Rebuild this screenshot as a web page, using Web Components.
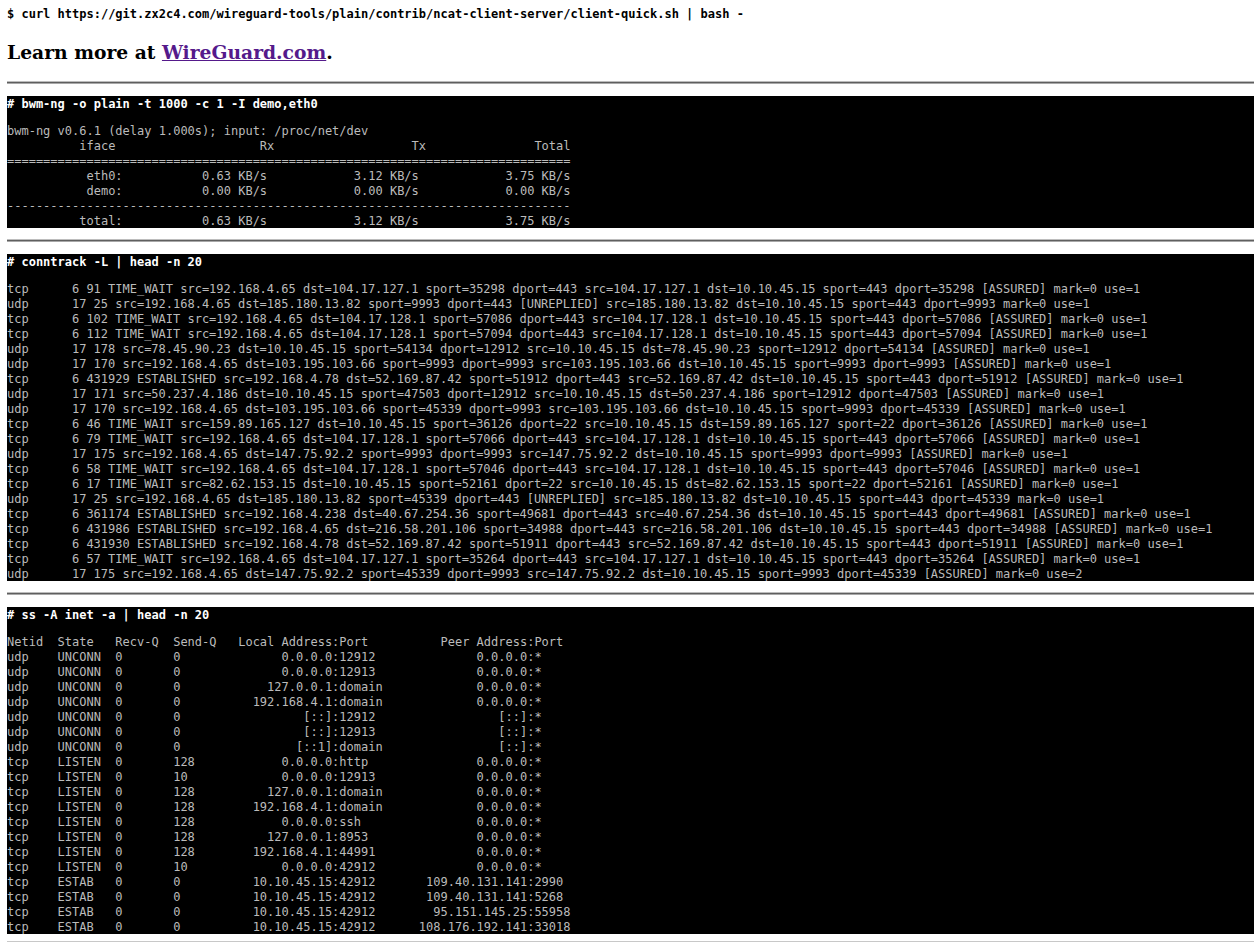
<!DOCTYPE html>
<html lang="en">
  <head>
    <meta charset="utf-8" />
    <title>WireGuard demo</title>
    <style>
      body {
        margin: 0;
        padding: 7px 0 0 7px;
        background: #fff;
        font-family: "DejaVu Serif", serif;
      }
    </style>
  </head>
  <body>
    <install-line>$ curl https://git.zx2c4.com/wireguard-tools/plain/contrib/ncat-client-server/client-quick.sh | bash -</install-line>
    <learn-more href="https://www.wireguard.com/">WireGuard.com</learn-more>
    <page-rule></page-rule>
    <term-block command="# bwm-ng -o plain -t 1000 -c 1 -I demo,eth0" id="bwm"></term-block>
    <page-rule></page-rule>
    <term-block command="# conntrack -L | head -n 20" id="conntrack" style="--squeeze: -0.007px"></term-block>
    <page-rule></page-rule>
    <term-block command="# ss -A inet -a | head -n 20" id="ss"></term-block>
    <page-rule class="last"></page-rule>

    <script type="module">
      const mono = '"DejaVu Sans Mono", monospace';

      customElements.define(
        "install-line",
        class extends HTMLElement {
          constructor() {
            super();
            this.attachShadow({ mode: "open" }).innerHTML = `
              <style>
                :host {
                  display: block;
                  font: bold 12px/15px ${mono};
                  color: #000;
                }
                pre {
                  margin: 0;
                  font: inherit;
                }
              </style>
              <pre><slot></slot></pre>`;
          }
        }
      );

      customElements.define(
        "learn-more",
        class extends HTMLElement {
          constructor() {
            super();
            const href = this.getAttribute("href");
            this.attachShadow({ mode: "open" }).innerHTML = `
              <style>
                :host {
                  display: block;
                  margin: 15px 0 14px;
                  font: bold 18.72px/30px "DejaVu Serif", serif;
                  color: #000;
                }
                a {
                  color: #551a8b;
                }
              </style>
              Learn more at <a href="${href}"><slot></slot></a>.`;
          }
        }
      );

      customElements.define(
        "page-rule",
        class extends HTMLElement {
          constructor() {
            super();
            this.attachShadow({ mode: "open" }).innerHTML = `
              <style>
                :host {
                  display: block;
                  height: 1px;
                  margin: 11px 0 12px;
                  border-top: 1px solid #bdbdbd;
                  border-bottom: 1px solid #a8a8a8;
                  background: #5f5f5f;
                }
                :host(.last) {
                  height: 0;
                  margin: 7px 0 0;
                  border-bottom: 0;
                  border-top-color: #c8c8c8;
                }
              </style>`;
          }
        }
      );

      customElements.define(
        "term-block",
        class extends HTMLElement {
          constructor() {
            super();
            this.attachShadow({ mode: "open" }).innerHTML = `
              <style>
                :host {
                  display: flow-root;
                  background: #000;
                  color: #bbb;
                  font: 12px/15px ${mono};
                }
                .command {
                  height: 14px;
                  line-height: 17px;
                  margin-bottom: 14px;
                  font-weight: bold;
                  color: #fff;
                  white-space: pre;
                }
                pre {
                  margin: 0 0 -1px;
                  font: inherit;
                  letter-spacing: var(--squeeze, 0);
                }
              </style>
              <div class="command"></div>
              <pre><slot></slot></pre>`;
            this.shadowRoot.querySelector(".command").textContent =
              this.getAttribute("command");
          }
        }
      );

      const bwmRow = (name, rx, tx, total) =>
        name.padStart(16) + rx.padStart(20) + tx.padStart(21) + total.padStart(21);

      document.querySelector("#bwm").textContent = [
        "bwm-ng v0.6.1 (delay 1.000s); input: /proc/net/dev",
        "iface".padStart(15) + "Rx".padStart(22) + "Tx".padStart(21) + "Total".padStart(20),
        "=".repeat(78),
        bwmRow("eth0:", "0.63 KB/s", "3.12 KB/s", "3.75 KB/s"),
        bwmRow("demo:", "0.00 KB/s", "0.00 KB/s", "0.00 KB/s"),
        "-".repeat(78),
        bwmRow("total:", "0.63 KB/s", "3.12 KB/s", "3.75 KB/s"),
      ].join("\n");

      document.querySelector("#conntrack").textContent = `tcp      6 91 TIME_WAIT src=192.168.4.65 dst=104.17.127.1 sport=35298 dport=443 src=104.17.127.1 dst=10.10.45.15 sport=443 dport=35298 [ASSURED] mark=0 use=1
udp      17 25 src=192.168.4.65 dst=185.180.13.82 sport=9993 dport=443 [UNREPLIED] src=185.180.13.82 dst=10.10.45.15 sport=443 dport=9993 mark=0 use=1
tcp      6 102 TIME_WAIT src=192.168.4.65 dst=104.17.128.1 sport=57086 dport=443 src=104.17.128.1 dst=10.10.45.15 sport=443 dport=57086 [ASSURED] mark=0 use=1
tcp      6 112 TIME_WAIT src=192.168.4.65 dst=104.17.128.1 sport=57094 dport=443 src=104.17.128.1 dst=10.10.45.15 sport=443 dport=57094 [ASSURED] mark=0 use=1
udp      17 178 src=78.45.90.23 dst=10.10.45.15 sport=54134 dport=12912 src=10.10.45.15 dst=78.45.90.23 sport=12912 dport=54134 [ASSURED] mark=0 use=1
udp      17 170 src=192.168.4.65 dst=103.195.103.66 sport=9993 dport=9993 src=103.195.103.66 dst=10.10.45.15 sport=9993 dport=9993 [ASSURED] mark=0 use=1
tcp      6 431929 ESTABLISHED src=192.168.4.78 dst=52.169.87.42 sport=51912 dport=443 src=52.169.87.42 dst=10.10.45.15 sport=443 dport=51912 [ASSURED] mark=0 use=1
udp      17 171 src=50.237.4.186 dst=10.10.45.15 sport=47503 dport=12912 src=10.10.45.15 dst=50.237.4.186 sport=12912 dport=47503 [ASSURED] mark=0 use=1
udp      17 170 src=192.168.4.65 dst=103.195.103.66 sport=45339 dport=9993 src=103.195.103.66 dst=10.10.45.15 sport=9993 dport=45339 [ASSURED] mark=0 use=1
tcp      6 46 TIME_WAIT src=159.89.165.127 dst=10.10.45.15 sport=36126 dport=22 src=10.10.45.15 dst=159.89.165.127 sport=22 dport=36126 [ASSURED] mark=0 use=1
tcp      6 79 TIME_WAIT src=192.168.4.65 dst=104.17.128.1 sport=57066 dport=443 src=104.17.128.1 dst=10.10.45.15 sport=443 dport=57066 [ASSURED] mark=0 use=1
udp      17 175 src=192.168.4.65 dst=147.75.92.2 sport=9993 dport=9993 src=147.75.92.2 dst=10.10.45.15 sport=9993 dport=9993 [ASSURED] mark=0 use=1
tcp      6 58 TIME_WAIT src=192.168.4.65 dst=104.17.128.1 sport=57046 dport=443 src=104.17.128.1 dst=10.10.45.15 sport=443 dport=57046 [ASSURED] mark=0 use=1
tcp      6 17 TIME_WAIT src=82.62.153.15 dst=10.10.45.15 sport=52161 dport=22 src=10.10.45.15 dst=82.62.153.15 sport=22 dport=52161 [ASSURED] mark=0 use=1
udp      17 25 src=192.168.4.65 dst=185.180.13.82 sport=45339 dport=443 [UNREPLIED] src=185.180.13.82 dst=10.10.45.15 sport=443 dport=45339 mark=0 use=1
tcp      6 361174 ESTABLISHED src=192.168.4.238 dst=40.67.254.36 sport=49681 dport=443 src=40.67.254.36 dst=10.10.45.15 sport=443 dport=49681 [ASSURED] mark=0 use=1
tcp      6 431986 ESTABLISHED src=192.168.4.65 dst=216.58.201.106 sport=34988 dport=443 src=216.58.201.106 dst=10.10.45.15 sport=443 dport=34988 [ASSURED] mark=0 use=1
tcp      6 431930 ESTABLISHED src=192.168.4.78 dst=52.169.87.42 sport=51911 dport=443 src=52.169.87.42 dst=10.10.45.15 sport=443 dport=51911 [ASSURED] mark=0 use=1
tcp      6 57 TIME_WAIT src=192.168.4.65 dst=104.17.127.1 sport=35264 dport=443 src=104.17.127.1 dst=10.10.45.15 sport=443 dport=35264 [ASSURED] mark=0 use=1
udp      17 175 src=192.168.4.65 dst=147.75.92.2 sport=45339 dport=9993 src=147.75.92.2 dst=10.10.45.15 sport=9993 dport=45339 [ASSURED] mark=0 use=2`;

      const rows = [
        ["udp", "UNCONN", "0", "0", "0.0.0.0:12912", "0.0.0.0:*"],
        ["udp", "UNCONN", "0", "0", "0.0.0.0:12913", "0.0.0.0:*"],
        ["udp", "UNCONN", "0", "0", "127.0.0.1:domain", "0.0.0.0:*"],
        ["udp", "UNCONN", "0", "0", "192.168.4.1:domain", "0.0.0.0:*"],
        ["udp", "UNCONN", "0", "0", "[::]:12912", "[::]:*"],
        ["udp", "UNCONN", "0", "0", "[::]:12913", "[::]:*"],
        ["udp", "UNCONN", "0", "0", "[::1]:domain", "[::]:*"],
        ["tcp", "LISTEN", "0", "128", "0.0.0.0:http", "0.0.0.0:*"],
        ["tcp", "LISTEN", "0", "10", "0.0.0.0:12913", "0.0.0.0:*"],
        ["tcp", "LISTEN", "0", "128", "127.0.0.1:domain", "0.0.0.0:*"],
        ["tcp", "LISTEN", "0", "128", "192.168.4.1:domain", "0.0.0.0:*"],
        ["tcp", "LISTEN", "0", "128", "0.0.0.0:ssh", "0.0.0.0:*"],
        ["tcp", "LISTEN", "0", "128", "127.0.0.1:8953", "0.0.0.0:*"],
        ["tcp", "LISTEN", "0", "128", "192.168.4.1:44991", "0.0.0.0:*"],
        ["tcp", "LISTEN", "0", "10", "0.0.0.0:42912", "0.0.0.0:*"],
        ["tcp", "ESTAB", "0", "0", "10.10.45.15:42912", "109.40.131.141:2990"],
        ["tcp", "ESTAB", "0", "0", "10.10.45.15:42912", "109.40.131.141:5268"],
        ["tcp", "ESTAB", "0", "0", "10.10.45.15:42912", "95.151.145.25:55958"],
        ["tcp", "ESTAB", "0", "0", "10.10.45.15:42912", "108.176.192.141:33018"],
      ];

      // ss keeps the port colon in one column, so pad up to it
      const ssLine = (r) => {
        const colon = (s) => s.lastIndexOf(":");
        const head = r[0].padEnd(7) + r[1].padEnd(8) + r[2].padEnd(8) + r[3];
        const local = head + " ".repeat(45 - head.length - colon(r[4])) + r[4];
        return local + " ".repeat(72 - local.length - colon(r[5])) + r[5];
      };

      document.querySelector("#ss").textContent = [
        "Netid".padEnd(7) + "State".padEnd(8) + "Recv-Q".padEnd(8) + "Send-Q".padEnd(9) +
          "Local Address:Port".padEnd(28) + "Peer Address:Port",
        ...rows.map(ssLine),
      ].join("\n");
    </script>
  </body>
</html>
